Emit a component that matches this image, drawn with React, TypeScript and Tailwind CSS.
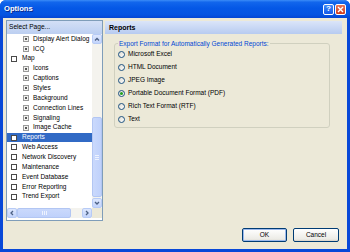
import React from "react";

type Item = { label: string; level: 0 | 1; selected?: boolean };

const items: Item[] = [
  { label: "Display Alert Dialog", level: 1 },
  { label: "ICQ", level: 1 },
  { label: "Map", level: 0 },
  { label: "Icons", level: 1 },
  { label: "Captions", level: 1 },
  { label: "Styles", level: 1 },
  { label: "Background", level: 1 },
  { label: "Connection Lines", level: 1 },
  { label: "Signaling", level: 1 },
  { label: "Image Cache", level: 1 },
  { label: "Reports", level: 0, selected: true },
  { label: "Web Access", level: 0 },
  { label: "Network Discovery", level: 0 },
  { label: "Maintenance", level: 0 },
  { label: "Event Database", level: 0 },
  { label: "Error Reporting", level: 0 },
  { label: "Trend Export", level: 0 },
];

const radios = [
  { label: "Microsoft Excel" },
  { label: "HTML Document" },
  { label: "JPEG Image" },
  { label: "Portable Document Format (PDF)", checked: true },
  { label: "Rich Text Format (RTF)" },
  { label: "Text" },
];

function Arrow({ dir }: { dir: "up" | "down" | "left" | "right" }) {
  const pts: Record<string, string> = {
    up: "2,5.5 4,3.5 6,5.5",
    down: "2,3 4,5 6,3",
    left: "5,2 3,4 5,6",
    right: "3,2 5,4 3,6",
  };
  return (
    <svg width="8" height="8" viewBox="0 0 8 8">
      <polyline points={pts[dir]} fill="none" stroke="#4d6185" strokeWidth="1.3" />
    </svg>
  );
}

function ScrollBtn({ dir, className }: { dir: "up" | "down" | "left" | "right"; className: string }) {
  return (
    <div
      className={`${className} flex items-center justify-center rounded-[2px] border border-[#b7cbf6] bg-[linear-gradient(to_bottom,#dde7fe,#c3d4fb)]`}
    >
      <Arrow dir={dir} />
    </div>
  );
}

export default function App() {
  return (
    <div className="w-[350px] h-[252px] flex flex-col rounded-t-[6px] overflow-hidden bg-[#0848d8] font-['Liberation_Sans',Arial,sans-serif] text-black select-none">
      {/* Title bar */}
      <div className="h-[18px] shrink-0 flex items-center pl-[4px] pr-[4px] bg-[linear-gradient(to_bottom,#3b8cf7_0%,#1266ec_12%,#0558e6_45%,#0454e2_80%,#0346d4_100%)]">
        <span className="text-white font-bold text-[7.6px] leading-none [text-shadow:1px_1px_0_#0a2a8a]">Options</span>
        <div className="ml-auto flex gap-[1px]">
          <div className="w-[11px] h-[11px] rounded-[2px] border border-white bg-[linear-gradient(to_bottom,#3f8bf8,#1559e8)] flex items-center justify-center text-white font-bold text-[8px] leading-none">
            ?
          </div>
          <div className="w-[11px] h-[11px] rounded-[2px] border border-white bg-[linear-gradient(to_bottom,#e8765a,#cf3c1c)] flex items-center justify-center">
            <svg width="7" height="7" viewBox="0 0 7 7">
              <path d="M1 1 L6 6 M6 1 L1 6" stroke="white" strokeWidth="1.4" />
            </svg>
          </div>
        </div>
      </div>

      {/* Body */}
      <div className="flex-1 mx-[3px] mb-[3px] bg-[#ece9d8] flex flex-col">
        <div className="flex pt-[2px] pl-[3px]">
          {/* Left panel */}
          <div className="w-[97px] h-[201px] border border-[#7f9db9] bg-white flex flex-col">
            <div className="h-[13px] shrink-0 flex items-center pl-[2px] bg-[linear-gradient(to_bottom,#d3dff6,#bccff1)] text-[6.6px] leading-none">
              Select Page...
            </div>
            <div className="h-[174px] flex">
              <div className="w-[85px] overflow-hidden">
                {items.map((it) => (
                  <div
                    key={it.label}
                    className={`h-[9.86px] flex items-center whitespace-nowrap ${
                      it.selected ? "bg-[#316ac5] text-white" : ""
                    } ${it.level === 0 ? "pl-[4px]" : "pl-[16px]"}`}
                  >
                    {it.level === 0 ? (
                      <div className="w-[6px] h-[6px] shrink-0 border border-[#4a4a4a] bg-white" />
                    ) : (
                      <div className="w-[6px] h-[6px] shrink-0 border border-[#9a9a9a] bg-[#f1f1ee] flex items-center justify-center">
                        <div className="w-[2px] h-[2px] bg-[#555]" />
                      </div>
                    )}
                    <span className={`text-[6.5px] leading-none ${it.level === 0 ? "ml-[5px]" : "ml-[4px]"}`}>
                      {it.label}
                    </span>
                  </div>
                ))}
              </div>
              {/* vertical scrollbar */}
              <div className="w-[10px] flex flex-col bg-[#f4f3ee]">
                <ScrollBtn dir="up" className="h-[10px] shrink-0" />
                <div className="h-[73px]" />
                <div className="h-[80px] rounded-[2px] border border-[#b2c6f3] bg-[linear-gradient(to_right,#cad9fc,#bfd1fb)] flex items-center justify-center">
                  <div className="flex flex-col gap-[1px]">
                    <div className="w-[4px] h-[1px] bg-[#eef3fe]" />
                    <div className="w-[4px] h-[1px] bg-[#eef3fe]" />
                    <div className="w-[4px] h-[1px] bg-[#eef3fe]" />
                  </div>
                </div>
                <div className="h-[1px]" />
                <ScrollBtn dir="down" className="h-[10px] shrink-0" />
              </div>
            </div>
            {/* horizontal scrollbar */}
            <div className="h-[10px] flex">
              <div className="w-[85px] flex bg-[#f4f3ee]">
                <ScrollBtn dir="left" className="w-[10px] shrink-0" />
                <div className="w-[54px] rounded-[2px] border border-[#b2c6f3] bg-[linear-gradient(to_bottom,#cad9fc,#bfd1fb)] flex items-center justify-center">
                  <div className="flex gap-[1px]">
                    <div className="w-[1px] h-[4px] bg-[#eef3fe]" />
                    <div className="w-[1px] h-[4px] bg-[#eef3fe]" />
                    <div className="w-[1px] h-[4px] bg-[#eef3fe]" />
                  </div>
                </div>
                <div className="w-[11px]" />
                <ScrollBtn dir="right" className="w-[10px] shrink-0" />
              </div>
              <div className="w-[10px] bg-[#ece9d8]" />
            </div>
          </div>

          {/* Right side */}
          <div className="ml-[2px] mt-[1px] w-[237px] flex flex-col">
            <div className="h-[13px] flex items-center pl-[4px] bg-[linear-gradient(to_bottom,#dbe5f9,#b7cbf0)] text-[7px] font-bold leading-none">
              Reports
            </div>
            <fieldset className="ml-[9px] mt-[5px] w-[216px] border border-[#d0d0bf] rounded-[3px] px-[3px] pb-[1px]">
              <legend className="px-[1px] text-[#0046d5] text-[6.5px] leading-[9px]">
                Export Format for Automatically Generated Reports:
              </legend>
              {radios.map((r) => (
                <div key={r.label} className="h-[13px] flex items-center">
                  <div className="w-[7px] h-[7px] shrink-0 rounded-full border border-[#1c5180] bg-[linear-gradient(135deg,#dcd9cf,#ffffff)] flex items-center justify-center">
                    {r.checked && <div className="w-[3px] h-[3px] rounded-full bg-[#21a121]" />}
                  </div>
                  <span className="ml-[3px] text-[6.5px] leading-none">{r.label}</span>
                </div>
              ))}
            </fieldset>
          </div>
        </div>

        {/* Buttons */}
        <div className="mt-auto flex justify-end gap-[6px] pr-[8px] pb-[7px]">
          <div className="w-[45px] h-[14px] rounded-[2px] border border-[#003c74] bg-[linear-gradient(to_bottom,#ffffff,#ecebe6_85%,#d6d0c5)] shadow-[inset_0_0_0_1px_#9cb9ec] flex items-center justify-center text-[6.5px] leading-none">
            OK
          </div>
          <div className="w-[46px] h-[14px] rounded-[2px] border border-[#003c74] bg-[linear-gradient(to_bottom,#ffffff,#ecebe6_85%,#d6d0c5)] flex items-center justify-center text-[6.5px] leading-none">
            Cancel
          </div>
        </div>
      </div>
    </div>
  );
}
